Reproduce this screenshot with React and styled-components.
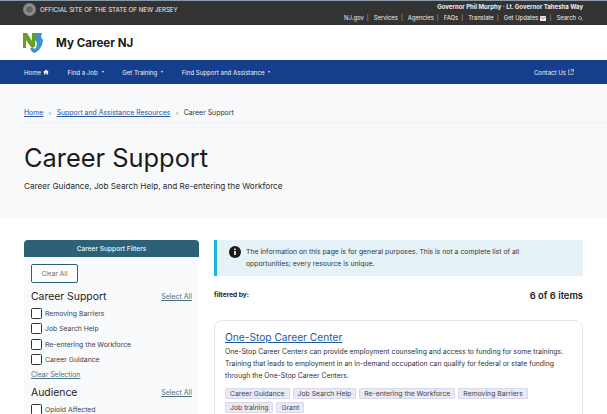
import styled, { createGlobalStyle } from 'styled-components';

const GlobalStyle = createGlobalStyle`
  html, body { margin: 0; padding: 0; background: #fff; }
  body { font-family: 'Inter', 'Liberation Sans', sans-serif; color: #1b1b1b; overflow: hidden; }
  * { box-sizing: border-box; }
`;

const Page = styled.div`
  width: 607px;
  height: 414px;
  overflow: hidden;
`;

const TopBar = styled.div`
  height: 25px;
  background: #333;
  border-top: 1px solid #8a9aa8;
  padding: 0 24px 0 23px;
  display: flex;
  justify-content: space-between;
  color: #f0f0f0;
`;

const Official = styled.div`
  display: flex;
  align-items: center;
  gap: 4px;
  height: 17px;
  font-size: 6.15px;
`;

const Seal = styled.span`
  width: 13px;
  height: 13px;
  border-radius: 50%;
  background: radial-gradient(circle, #666 0 3px, #9a9a9a 4px, #777 6px, #aaa 6.5px);
`;

const TopRight = styled.div`
  display: flex;
  flex-direction: column;
  align-items: flex-end;
  padding: 2px 0 0;
  gap: 4px;
`;

const Governor = styled.div`
  font-size: 6px;
  font-weight: 700;
  line-height: 7px;
`;

const TopLinks = styled.div`
  display: flex;
  align-items: center;
  font-size: 5.9px;
  line-height: 8px;
`;

const TopLink = styled.span`
  display: inline-flex;
  align-items: center;
  gap: 2px;
  & + &::before {
    content: '|';
    margin: 0 3px;
    color: #bbb;
  }
`;

const Brand = styled.div`
  height: 35px;
  background: #fff;
  display: flex;
  align-items: center;
  padding: 0 23px;
  gap: 12px;
`;

const SiteName = styled.div`
  font-size: 11.6px;
  font-weight: 700;
  color: #1b1b1b;
`;

const Nav = styled.nav`
  height: 24px;
  background: #153f8c;
  color: #f2f2f2;
  display: flex;
  align-items: center;
  padding: 0 33px 0 24px;
  font-size: 6.1px;
`;

const NavItem = styled.span`
  display: inline-flex;
  align-items: center;
  gap: 2px;
  margin-right: 18.5px;
  &:last-child { margin-left: auto; margin-right: 0; }
`;

const Caret = styled.span`
  width: 0;
  height: 0;
  margin-left: 2px;
  border-left: 1.5px solid transparent;
  border-right: 1.5px solid transparent;
  border-top: 2px solid #f2f2f2;
`;

const Hero = styled.section`
  height: 134px;
  background: #f8f9fa;
  padding: 24px 24px 0;
`;

const Crumbs = styled.div`
  height: 15px;
  display: flex;
  align-items: flex-start;
  font-size: 6.9px;
  line-height: 9px;
  color: #333;
  border-bottom: 1px solid #f0f1f2;
  margin-right: -24px;
`;

const CrumbLink = styled.a`
  color: #2a55a5;
  text-decoration: underline;
`;

const CrumbSep = styled.span`
  margin: 0 5.5px;
  color: #666;
  font-size: 6px;
`;

const Title = styled.h1`
  margin: 18px 0 0;
  font-size: 25.4px;
  line-height: 34px;
  font-weight: 400;
  color: #1b1b1b;
`;

const Subtitle = styled.p`
  margin: 5px 0 0;
  font-size: 8.2px;
  line-height: 12px;
  color: #2a2a2a;
`;

const Content = styled.div`
  display: grid;
  grid-template-columns: 175px 369px;
  column-gap: 15px;
  padding: 22px 24px 0;
`;

const Sidebar = styled.aside`
  height: 240px;
  background: #f8fafb;
  border-radius: 4px 4px 0 0;
`;

const SideHead = styled.div`
  height: 17px;
  background: #2c6178;
  border-radius: 4px 4px 0 0;
  color: #f2f6f8;
  font-size: 6.6px;
  font-weight: 500;
  display: flex;
  align-items: center;
  justify-content: center;
`;

const SideBody = styled.div`
  padding: 7px 7px 0;
`;

const ClearButton = styled.button`
  width: 47px;
  height: 19px;
  background: #fff;
  border: 1px solid #2c6178;
  border-radius: 2px;
  color: #666;
  font-family: inherit;
  font-size: 6.6px;
  padding: 0;
  display: block;
`;

const GroupHead = styled.div`
  display: flex;
  justify-content: space-between;
  align-items: center;
  height: 20px;
  margin-top: ${(p) => p.$top}px;
  font-size: 10.4px;
  color: #222;
`;

const SelectAll = styled.a`
  font-size: 7px;
  color: #4a7286;
  text-decoration: underline;
`;

const Check = styled.label`
  display: flex;
  align-items: center;
  gap: 3px;
  height: 15.3px;
  font-size: 6.85px;
  color: #444;
`;

const Box = styled.span`
  width: 11px;
  height: 11px;
  background: #fff;
  border: 1px solid #333;
  border-radius: 1.5px;
`;

const ClearSelection = styled.a`
  display: block;
  margin-top: 3px;
  font-size: 6.9px;
  line-height: 10px;
  color: #4a7286;
  text-decoration: underline;
`;

const Main = styled.main`
  min-width: 0;
`;

const Alert = styled.div`
  height: 36px;
  background: #e5f3f9;
  border-left: 3px solid #1ab5e0;
  padding: 6px 0 0 12px;
  display: flex;
  gap: 5px;
`;

const AlertText = styled.p`
  margin: 0;
  font-size: 6.85px;
  line-height: 11.5px;
  color: #333;
  width: 295px;
`;

const Results = styled.div`
  display: flex;
  justify-content: space-between;
  align-items: center;
  height: 14px;
  margin-top: 12px;
`;

const Filtered = styled.span`
  font-size: 6.6px;
  font-weight: 700;
  color: #222;
`;

const Count = styled.span`
  font-size: 9.4px;
  font-weight: 600;
  color: #222;
`;

const Card = styled.article`
  margin-top: 18px;
  height: 140px;
  border: 1px solid #e6e6e6;
  border-radius: 8px;
  padding: 9px 10px;
`;

const CardTitle = styled.a`
  display: block;
  font-size: 10.2px;
  line-height: 14px;
  color: #1f5a9c;
  text-decoration: underline;
`;

const CardText = styled.p`
  margin: 2px 0 0;
  font-size: 6.86px;
  line-height: 12px;
  color: #333;
`;

const Tags = styled.div`
  display: flex;
  flex-wrap: wrap;
  gap: 3.5px 3px;
  margin-top: 6px;
`;

const Tag = styled.span`
  height: 10.5px;
  padding: 0 4px;
  background: #eaeaf6;
  border: 1px solid #d8d8e8;
  border-radius: 1px;
  font-size: 6.85px;
  line-height: 9px;
  color: #444;
`;

function Logo() {
  return (
    <svg width="21" height="21" viewBox="0 0 21 21">
      <path d="M0 1h4l5 8V1h3v14H8L3 8v8H0z" fill="#6a9e1f" />
      <path d="M12 1h7l-1 4 2 3-1 5-3 5-4 3-3-1-2-4 3-1 1 2 2-1 1-5-2-3z" fill="#3d93d2" />
    </svg>
  );
}

function HomeIcon() {
  return (
    <svg width="6" height="6" viewBox="0 0 12 12" fill="#f2f2f2">
      <path d="M6 1 0 6.5h2V11h3V8h2v3h3V6.5h2z" />
    </svg>
  );
}

function MailIcon() {
  return (
    <svg width="6" height="5" viewBox="0 0 12 10" fill="#f0f0f0">
      <rect width="12" height="10" rx="1" />
      <path d="M1 2l5 3 5-3" fill="none" stroke="#333" />
    </svg>
  );
}

function SearchIcon() {
  return (
    <svg width="5" height="5" viewBox="0 0 10 10" fill="none" stroke="#ddd" strokeWidth="1.2">
      <circle cx="4" cy="4" r="3" />
      <path d="M6.5 6.5 9.5 9.5" />
    </svg>
  );
}

function ExternalIcon() {
  return (
    <svg width="6" height="6" viewBox="0 0 12 12" fill="none" stroke="#e8e8e8" strokeWidth="1.2">
      <path d="M10 7v4H1V2h4" />
      <path d="M6 1h5v5M11 1 5 7" />
    </svg>
  );
}

const InfoGlyph = styled.svg`
  flex: none;
`;

function InfoIcon() {
  return (
    <InfoGlyph width="12" height="12" viewBox="0 0 12 12">
      <circle cx="6" cy="6" r="6" fill="#1b1b1b" />
      <rect x="5.2" y="5" width="1.6" height="4" fill="#fff" />
      <rect x="5.2" y="2.6" width="1.6" height="1.5" fill="#fff" />
    </InfoGlyph>
  );
}

const careerOptions = ['Removing Barriers', 'Job Search Help', 'Re-entering the Workforce', 'Career Guidance'];
const topLinks = ['NJ.gov', 'Services', 'Agencies', 'FAQs', 'Translate'];
const tags = ['Career Guidance', 'Job Search Help', 'Re-entering the Workforce', 'Removing Barriers', 'Job training', 'Grant'];

export default function App() {
  return (
    <Page>
      <GlobalStyle />
      <TopBar>
        <Official>
          <Seal />
          OFFICIAL SITE OF THE STATE OF NEW JERSEY
        </Official>
        <TopRight>
          <Governor>Governor Phil Murphy · Lt. Governor Tahesha Way</Governor>
          <TopLinks>
            {topLinks.map((link) => (
              <TopLink key={link}>{link}</TopLink>
            ))}
            <TopLink>Get Updates <MailIcon /></TopLink>
            <TopLink>Search <SearchIcon /></TopLink>
          </TopLinks>
        </TopRight>
      </TopBar>

      <Brand>
        <Logo />
        <SiteName>My Career NJ</SiteName>
      </Brand>

      <Nav>
        <NavItem>Home <HomeIcon /></NavItem>
        <NavItem>Find a Job <Caret /></NavItem>
        <NavItem>Get Training <Caret /></NavItem>
        <NavItem>Find Support and Assistance <Caret /></NavItem>
        <NavItem>Contact Us <ExternalIcon /></NavItem>
      </Nav>

      <Hero>
        <Crumbs>
          <CrumbLink>Home</CrumbLink>
          <CrumbSep>›</CrumbSep>
          <CrumbLink>Support and Assistance Resources</CrumbLink>
          <CrumbSep>›</CrumbSep>
          Career Support
        </Crumbs>
        <Title>Career Support</Title>
        <Subtitle>Career Guidance, Job Search Help, and Re-entering the Workforce</Subtitle>
      </Hero>

      <Content>
        <Sidebar>
          <SideHead>Career Support Filters</SideHead>
          <SideBody>
            <ClearButton>Clear All</ClearButton>
            <GroupHead $top={3}>
              Career Support
              <SelectAll>Select All</SelectAll>
            </GroupHead>
            {careerOptions.map((option) => (
              <Check key={option}><Box />{option}</Check>
            ))}
            <ClearSelection>Clear Selection</ClearSelection>
            <GroupHead $top={2}>
              Audience
              <SelectAll>Select All</SelectAll>
            </GroupHead>
            <Check><Box />Opioid Affected</Check>
          </SideBody>
        </Sidebar>

        <Main>
          <Alert>
            <InfoIcon />
            <AlertText>
              The information on this page is for general purposes. This is not a complete list of all
              opportunities; every resource is unique.
            </AlertText>
          </Alert>
          <Results>
            <Filtered>filtered by:</Filtered>
            <Count>6 of 6 items</Count>
          </Results>
          <Card>
            <CardTitle>One-Stop Career Center</CardTitle>
            <CardText>
              One-Stop Career Centers can provide employment counseling and access to funding for some trainings.
              Training that leads to employment in an in-demand occupation can qualify for federal or state funding
              through the One-Stop Career Centers.
            </CardText>
            <Tags>
              {tags.map((tag) => (
                <Tag key={tag}>{tag}</Tag>
              ))}
            </Tags>
          </Card>
        </Main>
      </Content>
    </Page>
  );
}
